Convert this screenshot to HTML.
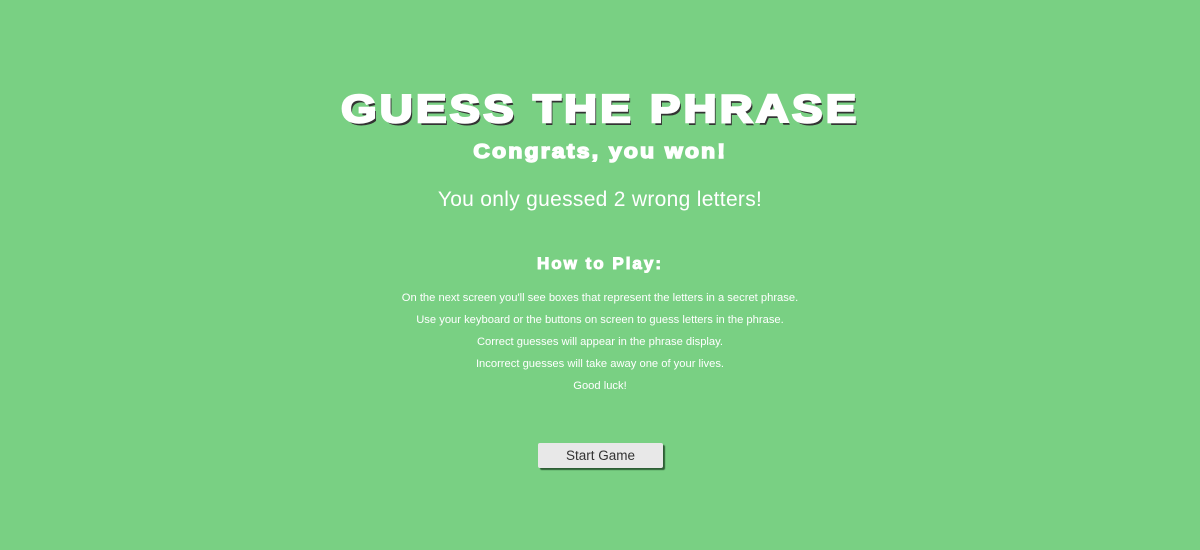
<!DOCTYPE html>
<html><head><style>
body{margin:0;width:1200px;height:550px;background:#79d083;font-family:"Liberation Sans",sans-serif;color:#fff;position:relative;overflow:hidden}
.c{position:absolute;left:0;width:1200px;text-align:center;white-space:nowrap}
.t{display:inline-block;font-weight:bold;-webkit-text-stroke:2.5px #fff}
</style></head><body>
<div class="c" style="top:88px"><span class="t" style="font-size:39px;letter-spacing:3px;transform:scaleX(1.16);text-shadow:2px 3px 0 #333;">GUESS THE PHRASE</span></div>
<div class="c" style="top:141px"><span class="t" style="font-size:20px;letter-spacing:2px;-webkit-text-stroke:1.5px #fff;transform:scaleX(1.14)">Congrats, you won!</span></div>
<div class="c" style="top:188px;font-size:21px;letter-spacing:0.3px">You only guessed 2 wrong letters!</div>
<div class="c" style="top:254px"><span class="t" style="font-size:17px;letter-spacing:2px;-webkit-text-stroke:1px #fff">How to Play:</span></div>
<div class="c" style="top:287px;font-size:11.2px;line-height:22px">On the next screen you'll see boxes that represent the letters in a secret phrase.<br>Use your keyboard or the buttons on screen to guess letters in the phrase.<br>Correct guesses will appear in the phrase display.<br>Incorrect guesses will take away one of your lives.<br>Good luck!</div>
<div style="position:absolute;left:538px;top:443px;width:125px;height:25px;background:#e8e8e8;border-radius:2px;box-shadow:2px 2px 1px #2e5e35;color:#333;font-size:13.5px;line-height:25px;text-align:center">Start Game</div>
</body></html>
